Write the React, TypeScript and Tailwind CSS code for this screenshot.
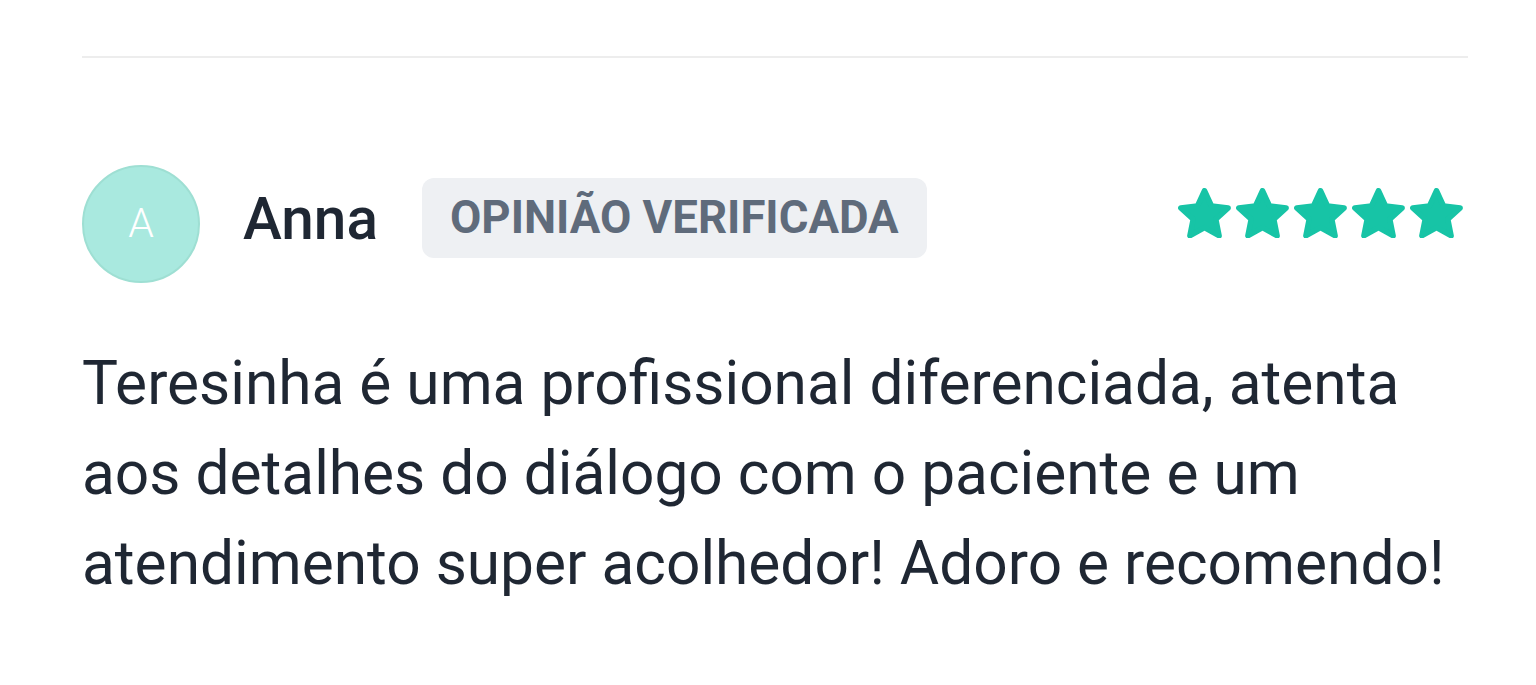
import React from "react";

const Star = () => (
  <svg viewBox="1.35 1.5 21.3 20.1" className="h-[50px] w-[53px]">
    <polygon
      points="12,2.6 14.82,8.72 21.51,9.51 16.56,14.08 17.88,20.69 12,17.4 6.12,20.69 7.44,14.08 2.49,9.51 9.18,8.72"
      fill="#17c4a6"
      stroke="#17c4a6"
      strokeWidth="2.2"
      strokeLinejoin="round"
    />
  </svg>
);

const App = () => {
  return (
    <div
      className="h-[685px] w-[1536px] bg-white pl-[82px] pr-[68px] pt-[56px]"
      style={{ fontFamily: "Roboto, 'Liberation Sans', sans-serif" }}
    >
      <div className="h-[2px] bg-[#ededed]" />

      <div className="mt-[107px] flex items-center">
        <div className="flex h-[118px] w-[118px] shrink-0 items-center justify-center rounded-full border-2 border-[#9edfd3] bg-[#a9e9df] text-[41px] font-light text-white">
          A
        </div>
        <div className="mb-[12px] flex flex-1 items-center">
          <p className="ml-[43px] pt-[4px] text-[58.5px] font-medium text-[#1f2733]">
            Anna
          </p>
          <div className="ml-[44px] flex h-[80px] items-center rounded-[12px] bg-[#eef0f3] px-[28px]">
            <span className="text-[45.5px] font-bold text-[#5f6b7b]">
              OPINIÃO VERIFICADA
            </span>
          </div>
          <div className="mb-[10px] ml-auto mr-[5px] flex gap-[5px]">
            <Star />
            <Star />
            <Star />
            <Star />
            <Star />
          </div>
        </div>
      </div>

      <p className="mt-[56px] text-[60.4px] leading-[90px] text-[#1f2733]">
        Teresinha é uma profissional diferenciada, atenta aos detalhes do
        diálogo com o paciente e um atendimento super acolhedor! Adoro e
        recomendo!
      </p>
    </div>
  );
};

export default App;
